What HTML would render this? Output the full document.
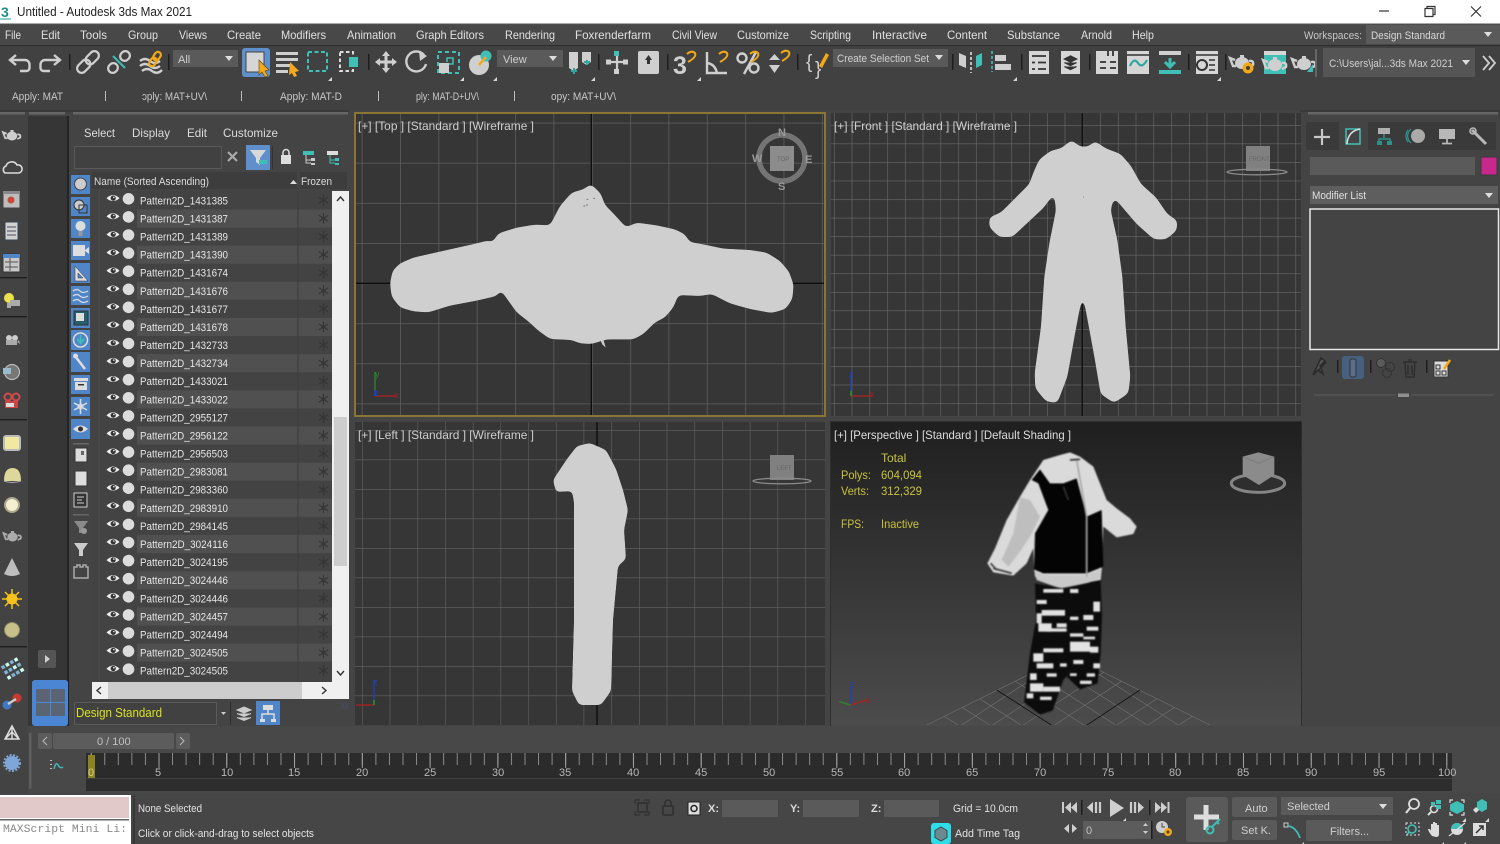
<!DOCTYPE html>
<html lang="en"><head><meta charset="utf-8"><title>Untitled - Autodesk 3ds Max 2021</title>
<style>
html,body{margin:0;padding:0;width:1500px;height:844px;overflow:hidden;background:#444}
svg{display:block;position:absolute;left:0;top:0}
text{font-family:"Liberation Sans",sans-serif;font-size:12px;fill:#dcdcdc}
.s{font-size:11px}
.m text,.m{font-size:12px;fill:#e0e0e0}
.v{font-size:12px;fill:#cfcfcf}
.y{font-size:12px;fill:#c9c23e}
.n{font-size:11px;fill:#e6e6e6}
.t{font-size:11px;fill:#b8b8b8}
.i{fill:none;stroke:#cfcfcf;stroke-width:2.4}
.k{fill:#cfcfcf}
</style></head><body>
<svg width="1500" height="844" viewBox="0 0 1500 844" xmlns="http://www.w3.org/2000/svg">
<defs>
<pattern id="gt" x="361.7" y="122.7" width="38.35" height="40.1" patternUnits="userSpaceOnUse"><path d="M0 0H38.35M0 0V40.1" stroke="#5e5e5e" stroke-width="1.6" fill="none"/></pattern>
<pattern id="gf" x="851.7" y="125" width="17.75" height="18.55" patternUnits="userSpaceOnUse"><path d="M0 0H17.75M0 0V18.55" stroke="#6a6a6a" stroke-width="1.2" fill="none"/></pattern>
<pattern id="gl" x="362" y="430" width="27.7" height="29.5" patternUnits="userSpaceOnUse"><path d="M0 0H27.7M0 0V29.5" stroke="#626262" stroke-width="1.2" fill="none"/></pattern>
<pattern id="tk" x="90.7" y="753" width="13.556" height="12" patternUnits="userSpaceOnUse"><path d="M.5 0V12" stroke="#8a8a8a" stroke-width="1"/></pattern>
<pattern id="tk5" x="90.7" y="753" width="67.78" height="15" patternUnits="userSpaceOnUse"><path d="M.5 0V15" stroke="#a0a0a0" stroke-width="1"/></pattern>
<linearGradient id="pb" x1="0" y1="0" x2="0" y2="1"><stop offset="0" stop-color="#1f1f1f"/><stop offset="1" stop-color="#4c4c4c"/></linearGradient>
<clipPath id="pc"><rect x="0" y="0" width="1410" height="915"/></clipPath>
<filter id="b1" color-interpolation-filters="sRGB"><feGaussianBlur stdDeviation="2.6"/></filter>
<filter id="b2" color-interpolation-filters="sRGB"><feGaussianBlur stdDeviation="14"/></filter>
<filter id="rd" color-interpolation-filters="sRGB"><feGaussianBlur stdDeviation="8"/><feColorMatrix values="1 0 0 0 0 0 1 0 0 0 0 0 1 0 0 0 0 0 16 -7.500"/></filter>
<filter id="rd2" color-interpolation-filters="sRGB" x="-20%" y="-10%" width="140%" height="120%"><feGaussianBlur stdDeviation="2.500"/><feColorMatrix values="1 0 0 0 0 0 1 0 0 0 0 0 1 0 0 0 0 0 16 -7.500"/></filter>
<g id="r">
<path d="M106.500 7 Q113 .5 119.500 7 Q113 12.500 106.500 7Z" fill="#eee"/><circle cx="113.200" cy="6.800" r="2.600" fill="#333"/><circle cx="113.800" cy="6" r=".8" fill="#eee"/>
<circle cx="128.500" cy="7.500" r="5.800" fill="#dcdcdc"/>
<path d="M323.500 3.500V14.500M318.800 6L328.200 12M328.200 6L318.800 12" stroke="#363636" stroke-width="1.200"/><circle cx="323.500" cy="9" r="1.800" fill="#363636"/>
</g>
<path id="fm" d="M0 0L-4 4H0Z" fill="#d8d8d8"/>
<g id="tpot"><ellipse cx="0" cy="0" rx="7" ry="6" fill="#cfcfcf"/><path d="M-7-3L-12-5-9 3-6 3M7-2Q12-3 11 2L7 4" class="i" stroke-width="2"/><rect x="-2" y="-8" width="4" height="3" fill="#cfcfcf"/></g>
</defs>

<rect width="1500" height="844" fill="#444"/>
<!-- title bar -->
<rect width="1500" height="23.500" fill="#fff"/>
<rect y="23" width="1500" height="1.200" fill="#a8a8a8"/>
<text x="1" y="17" style="font-size:14px;font-weight:bold;fill:#1d8f8c">3</text>
<rect x="0" y="18" width="11" height="2" fill="#8fd0cf"/>
<text x="17" y="16" textLength="175" lengthAdjust="spacingAndGlyphs" style="fill:#222;font-size:12.500px">Untitled - Autodesk 3ds Max 2021</text>
<path d="M1379 11H1389" stroke="#333" stroke-width="1.200"/>
<path d="M1425 8.500h8v8h-8zM1427 8.500v-2h8v8h-2" fill="none" stroke="#333" stroke-width="1.200"/>
<path d="M1471 6.500L1481 16.500M1481 6.500L1471 16.500" stroke="#333" stroke-width="1.200"/>

<!-- menu bar -->
<rect y="24.200" width="1500" height="21" fill="#484848"/>
<rect y="45" width="1500" height="1.200" fill="#2e2e2e"/>
<g class="m">
<text x="5" y="39" textLength="16" lengthAdjust="spacingAndGlyphs">File</text>
<text x="41" y="39" textLength="19" lengthAdjust="spacingAndGlyphs">Edit</text>
<text x="80" y="39" textLength="27" lengthAdjust="spacingAndGlyphs">Tools</text>
<text x="128" y="39" textLength="30" lengthAdjust="spacingAndGlyphs">Group</text>
<text x="179" y="39" textLength="28" lengthAdjust="spacingAndGlyphs">Views</text>
<text x="227" y="39" textLength="34" lengthAdjust="spacingAndGlyphs">Create</text>
<text x="281" y="39" textLength="45" lengthAdjust="spacingAndGlyphs">Modifiers</text>
<text x="347" y="39" textLength="49" lengthAdjust="spacingAndGlyphs">Animation</text>
<text x="416" y="39" textLength="68" lengthAdjust="spacingAndGlyphs">Graph Editors</text>
<text x="505" y="39" textLength="50" lengthAdjust="spacingAndGlyphs">Rendering</text>
<text x="575" y="39" textLength="76" lengthAdjust="spacingAndGlyphs">Foxrenderfarm</text>
<text x="672" y="39" textLength="45" lengthAdjust="spacingAndGlyphs">Civil View</text>
<text x="737" y="39" textLength="52" lengthAdjust="spacingAndGlyphs">Customize</text>
<text x="810" y="39" textLength="41" lengthAdjust="spacingAndGlyphs">Scripting</text>
<text x="872" y="39" textLength="55" lengthAdjust="spacingAndGlyphs">Interactive</text>
<text x="947" y="39" textLength="40" lengthAdjust="spacingAndGlyphs">Content</text>
<text x="1007" y="39" textLength="53" lengthAdjust="spacingAndGlyphs">Substance</text>
<text x="1081" y="39" textLength="31" lengthAdjust="spacingAndGlyphs">Arnold</text>
<text x="1132" y="39" textLength="22" lengthAdjust="spacingAndGlyphs">Help</text>
</g>
<text x="1304" y="39" class="s" textLength="58" lengthAdjust="spacingAndGlyphs" style="fill:#c8c8c8">Workspaces:</text>
<rect x="1366" y="25" width="134" height="19" fill="#5a5a5a"/>
<text x="1371" y="39" class="s" textLength="74" lengthAdjust="spacingAndGlyphs" style="fill:#d8d8d8">Design Standard</text>
<path d="M1484 32h8l-4 5z" fill="#ddd"/>

<!-- main toolbar -->
<rect y="46.200" width="1500" height="38" fill="#414141"/>
<path d="M16 55l-6 5 6 5" class="i" stroke-width="3"/><path d="M11 60H25a4.500 4.500 0 0 1 4.500 4.500V68a3 3 0 0 1-3 3H20" class="i" stroke-width="3"/>
<g transform="translate(70,0) scale(-1,1)"><path d="M16 55l-6 5 6 5" class="i" stroke-width="3"/><path d="M11 60H25a4.500 4.500 0 0 1 4.500 4.500V68a3 3 0 0 1-3 3H20" class="i" stroke-width="3"/></g>
<rect x="69" y="54" width="1.500" height="16" fill="#1e1e1e"/>
<g transform="translate(88,62) rotate(-45)" fill="none" stroke="#cfcfcf" stroke-width="2.200"><rect x="-13.500" y="-4.500" width="15" height="9" rx="4.500"/><rect x="-1.500" y="-4.500" width="15" height="9" rx="4.500"/></g>
<g transform="translate(119,62) rotate(-45)" fill="none" stroke="#cfcfcf" stroke-width="2.200"><rect x="-13.500" y="-4.500" width="10" height="9" rx="4.500"/><rect x="3.500" y="-4.500" width="10" height="9" rx="4.500"/></g>
<path d="M113 56L125 68" stroke="#3cb8b0" stroke-width="2.200"/>
<path d="M140 61q5-4 10 0t10 0M140 66q5-4 10 0t10 0M142 71q5-4 10 0t10-1" class="i" stroke-width="1.800"/>
<g transform="translate(155,59) rotate(-55)" fill="none" stroke="#f2a818" stroke-width="2.200"><rect x="-8" y="-3" width="9" height="6" rx="3"/><rect x="-1" y="-3" width="9" height="6" rx="3"/></g>
<rect x="168" y="54" width="1.500" height="16" fill="#1e1e1e"/>
<rect x="173" y="50" width="65" height="17" fill="#5a5a5a"/>
<text x="178" y="63" class="s" style="fill:#cfcfcf">All</text>
<path d="M225 56h8l-4 5z" fill="#ddd"/>
<rect x="242" y="48" width="28" height="29" rx="3" fill="#5f90cc"/>
<rect x="246" y="52" width="18" height="20" fill="#d6d6d6" stroke="#444"/>
<path d="M259 60l10 10-4 1 3 5-3 1-3-5-3 3z" fill="#f4a91c" stroke="#5a4210" stroke-width=".6"/>
<path d="M276 52h22v3h-22zM276 58h22v3h-22zM276 64h14v3h-14zM276 70h12v3h-12z" fill="#cfcfcf"/>
<path d="M290 62l9 9-4 1 2 4-3 1-2-4-3 2z" fill="#f4a91c"/>
<rect x="308" y="52" width="19" height="19" fill="none" stroke="#3fbfb6" stroke-width="2" stroke-dasharray="4 2.500"/>
<use href="#fm" x="332" y="77"/>
<rect x="340" y="52" width="13" height="19" fill="none" stroke="#ddd" stroke-width="2" stroke-dasharray="3.500 2.500"/>
<rect x="349" y="57" width="9" height="10" fill="#3fbfb6"/>
<rect x="368" y="54" width="1.500" height="16" fill="#1e1e1e"/>
<path d="M386 51l4 5h-2.500v4.500H392V58l5 4-5 4v-2.500h-4.500V68h2.500l-4 5-4-5h2.500v-4.500H380V66l-5-4 5-4v2.500h4.500V56H382z" class="k"/>
<path d="M424 55a10 10 0 1 0 2 9" class="i" stroke-width="3.200"/><path d="M419 51l8 5-7 5z" class="k"/>
<rect x="438" y="52" width="21" height="21" fill="none" stroke="#3fbfb6" stroke-width="2" stroke-dasharray="4 3"/>
<rect x="439" y="63" width="10" height="10" fill="#cfcfcf"/><path d="M447 62v-4h6v6h-4" fill="none" stroke="#3fbfb6" stroke-width="1.500"/>
<use href="#fm" x="464" y="77"/>
<circle cx="479" cy="65" r="10" fill="#cfcfcf"/><circle cx="486" cy="56" r="5.500" fill="#3fbfb6"/><path d="M479 65l7-8" stroke="#f4a91c" stroke-width="2.500"/><use href="#fm" x="497" y="77"/>
<rect x="497" y="50" width="66" height="17" fill="#5a5a5a"/>
<text x="503" y="63" class="s" style="fill:#cfcfcf">View</text>
<path d="M549 56h8l-4 5z" fill="#ddd"/>
<path d="M569 52h9v16l-4.500 3-4.500-3zM582 52h9v10l-4.500 3-4.500-3z" fill="#cfcfcf"/>
<path d="M574 68v6M571 71h6M587 60v5M584 62h6" stroke="#2fa8a2" stroke-width="2"/>
<use href="#fm" x="595" y="77"/><rect x="598" y="54" width="1.500" height="16" fill="#1e1e1e"/>
<path d="M617 56v18M606 62h22" stroke="#cfcfcf" stroke-width="2.200"/>
<rect x="614" y="51" width="5" height="5" fill="#3fbfb6"/><rect x="606" y="59.500" width="5" height="5" fill="#cfcfcf"/><rect x="623" y="59.500" width="5" height="5" fill="#cfcfcf"/><rect x="614" y="69" width="5" height="5" fill="#cfcfcf"/>
<rect x="638" y="51" width="21" height="23" rx="2" fill="#cfcfcf"/><path d="M645 60l3.500-5 3.500 5h-2v4h-3v-4z" fill="#333"/>
<rect x="667" y="54" width="1.500" height="16" fill="#1e1e1e"/>
<text x="673" y="74" style="font-size:25px;font-weight:bold;fill:#cfcfcf">3</text>
<path d="M688 62q9-5 7-9-3-3-8 1" fill="none" stroke="#f2a818" stroke-width="2"/><use href="#fm" x="701" y="77"/>
<path d="M707 52v21h20M707 63q8 1 10 10" class="i" stroke-width="2.400"/><path d="M720 62q9-5 7-9-3-3-8 1" fill="none" stroke="#f2a818" stroke-width="2"/>
<circle cx="742" cy="58" r="4.500" class="i"/><circle cx="754" cy="68" r="4.500" class="i"/><path d="M756 52l-12 22" class="i"/>
<path d="M745 62q9-5 7-9-3-3-8 1" fill="none" stroke="#f2a818" stroke-width="2" transform="translate(6,0)"/>
<path d="M769 60l5.500-6 5.500 6zM769 65h11l-5.500 8z" class="k"/>
<path d="M782 61q9-5 7-9-3-3-8 1" fill="none" stroke="#f2a818" stroke-width="2"/>
<rect x="797" y="54" width="1.500" height="16" fill="#1e1e1e"/>
<text x="806" y="68" style="font-size:19px;fill:#cfcfcf">{</text><text x="815" y="75" style="font-size:19px;fill:#cfcfcf">}</text>
<path d="M819 66l7-13 3 2-7 13z" fill="#f2a818"/>
<rect x="833" y="49" width="115" height="18" fill="#5a5a5a"/>
<text x="837" y="62" class="s" textLength="92" lengthAdjust="spacingAndGlyphs" style="fill:#cfcfcf">Create Selection Set</text>
<path d="M935 55h8l-4 5z" fill="#ddd"/>
<rect x="952" y="54" width="1.500" height="16" fill="#1e1e1e"/>
<path d="M959 53l7 3v12l-7-3z" class="k"/><path d="M971 52v21" stroke="#ddd" stroke-width="1.600" stroke-dasharray="3 2"/><path d="M982 53l-6 3v12l6-3z" fill="#3fbfb6"/>
<path d="M992 51v21" stroke="#3fbfb6" stroke-width="1.600" stroke-dasharray="3 2"/><rect x="995" y="55" width="11" height="6" class="k"/><rect x="995" y="64" width="16" height="6" class="k"/><use href="#fm" x="1017" y="77"/>
<rect x="1021" y="54" width="1.500" height="16" fill="#1e1e1e"/>
<rect x="1029" y="51" width="20" height="23" fill="#d6d6d6"/><path d="M1032 56h14M1032 62.500h3M1038 62.500h8M1032 69h3M1038 69h8" stroke="#333" stroke-width="1.800"/>
<rect x="1061" y="51" width="19" height="23" fill="#d6d6d6"/><path d="M1070.500 56l6 3-6 3-6-3zM1064.500 62.500l6 3 6-3M1064.500 66.500l6 3 6-3" fill="#333" stroke="#333" stroke-width="1.400"/>
<rect x="1089" y="54" width="1.500" height="16" fill="#1e1e1e"/>
<rect x="1096" y="51" width="22" height="23" fill="#d6d6d6"/><path d="M1108 51v5M1113 51v5M1100 62h6M1110 62h6M1100 68h6M1110 68h6" stroke="#333" stroke-width="1.800"/>
<rect x="1127" y="51" width="22" height="23" fill="#d6d6d6"/><path d="M1127 55h22" stroke="#333" stroke-width="1.500"/><path d="M1130 66q4-9 8-3t9-3" fill="none" stroke="#2fa8a2" stroke-width="2.200"/>
<rect x="1159" y="51" width="22" height="4" fill="#cfcfcf"/><path d="M1170 58v7M1165 62l5 5 5-5" stroke="#3fbfb6" stroke-width="3" fill="none"/><rect x="1159" y="70" width="22" height="4" fill="#3fbfb6"/>
<rect x="1188" y="54" width="1.500" height="16" fill="#1e1e1e"/>
<rect x="1196" y="51" width="22" height="23" fill="#d6d6d6"/><path d="M1196 55h22" stroke="#333" stroke-width="1.500"/><circle cx="1202" cy="65" r="5" fill="none" stroke="#333" stroke-width="2"/><path d="M1209 60h6M1209 65h6M1209 70h6" stroke="#333" stroke-width="1.500"/><use href="#fm" x="1221" y="77"/>
<rect x="1225" y="54" width="1.500" height="16" fill="#1e1e1e"/>
<use href="#tpot" x="1242" y="63"/>
<circle cx="1248" cy="68" r="5.500" fill="#f2a818"/><circle cx="1248" cy="68" r="2" fill="#414141"/>
<rect x="1264" y="51" width="22" height="23" fill="#3fbfb6"/><rect x="1264" y="51" width="22" height="4" fill="#d6d6d6"/><use href="#tpot" x="1275" y="65"/>
<use href="#tpot" x="1304" y="64"/><path d="M1307 72l6-8v8z" fill="#3fbfb6"/>
<rect x="1315" y="49" width="2" height="28" fill="#666"/>
<rect x="1323" y="48" width="152" height="29" fill="#555"/>
<text x="1329" y="67" class="s" textLength="124" lengthAdjust="spacingAndGlyphs" style="fill:#d0d0d0">C:\Users\jal...3ds Max 2021</text>
<path d="M1462 60h8l-4 5z" fill="#ddd"/>
<path d="M1483 56l6 7-6 7M1489 56l6 7-6 7" fill="none" stroke="#cfcfcf" stroke-width="1.800"/>

<!-- ribbon row -->
<rect y="84" width="1500" height="26" fill="#414141"/>
<text x="12" y="100" class="s" textLength="51" lengthAdjust="spacingAndGlyphs" style="fill:#c8c8c8">Apply: MAT</text>
<text x="142" y="100" class="s" textLength="65" lengthAdjust="spacingAndGlyphs" style="fill:#c8c8c8">ɔply: MAT+UV\</text>
<text x="280" y="100" class="s" textLength="62" lengthAdjust="spacingAndGlyphs" style="fill:#c8c8c8">Apply: MAT-D</text>
<text x="416" y="100" class="s" textLength="63" lengthAdjust="spacingAndGlyphs" style="fill:#c8c8c8">ply: MAT-D+UV\</text>
<text x="551" y="100" class="s" textLength="65" lengthAdjust="spacingAndGlyphs" style="fill:#c8c8c8">opy: MAT+UV\</text>
<path d="M105.500 91v10M241.500 91v10M378.500 91v10M514.500 91v10" stroke="#bbb" stroke-width="1"/>

<!-- dock strip -->
<rect y="110" width="1500" height="2" fill="#3a3a3a"/>
<rect x="0" y="112" width="25" height="2.500" fill="#666"/><rect x="29" y="112" width="36" height="2.500" fill="#666"/><rect x="73" y="112" width="275" height="2.500" fill="#666"/><rect x="1308" y="112" width="190" height="2.500" fill="#666"/>

<!-- left strip -->
<rect x="0" y="116" width="28" height="610" fill="#434343"/>
<rect x="28" y="116" width="39" height="610" fill="#363636"/>
<rect x="67" y="116" width="2" height="610" fill="#242424"/>
<g transform="translate(12,136) scale(.75)"><use href="#tpot"/></g>
<path d="M5 173a4 4 0 0 1 1-7 6 6 0 0 1 11-1 4 4 0 0 1 2 8z" fill="none" stroke="#ddd" stroke-width="1.600"/>
<rect x="3" y="191" width="17" height="17" fill="#bdbdbd" stroke="#444"/><rect x="3" y="191" width="17" height="3" fill="#888"/><circle cx="11" cy="200" r="3.500" fill="#c8483a"/>
<rect x="5" y="222" width="13" height="18" fill="#d0d0d0" stroke="#345"/><path d="M7 227h9M7 231h9M7 235h9" stroke="#667" stroke-width="1.200"/>
<rect x="3" y="254" width="17" height="18" fill="#c8c8c8" stroke="#333"/><rect x="3" y="254" width="17" height="4" fill="#4f86c6"/><path d="M5 262h13M5 267h13M10 258v13" stroke="#555"/>
<rect x="0" y="277" width="27" height="1.400" fill="#1e1e1e"/>
<circle cx="9" cy="298" r="5" fill="#ede04e"/><rect x="7" y="303" width="4" height="5" fill="#aaa"/><rect x="10" y="300" width="10" height="6" fill="#aaa"/>
<rect x="0" y="316" width="27" height="1.400" fill="#1e1e1e"/>
<circle cx="9" cy="338" r="3" fill="#ccc"/><circle cx="15" cy="338" r="3" fill="#ccc"/><rect x="6" y="340" width="11" height="5" fill="#aaa"/><path d="M19 340l-2 2 3 2z" fill="#aaa"/>
<circle cx="12" cy="372" r="7.500" fill="#777" stroke="#ccc"/><rect x="3" y="368" width="8" height="6" fill="#9bc"/>
<circle cx="8" cy="397" r="3.500" fill="none" stroke="#d04a4a" stroke-width="2"/><circle cx="16" cy="397" r="3.500" fill="none" stroke="#d04a4a" stroke-width="2"/><rect x="5" y="401" width="13" height="7" fill="#c94545"/><rect x="6" y="403" width="8" height="4" fill="#ddd"/>
<rect x="0" y="419" width="27" height="1.400" fill="#1e1e1e"/>
<rect x="4" y="436" width="16" height="14" rx="2" fill="#f1e9a0" stroke="#bbb" stroke-width="2"/>
<path d="M4 481q0-13 8.500-13t8.500 13z" fill="#ddd79c"/><path d="M4 481q8 3 17 0" stroke="#aaa" fill="none"/>
<circle cx="12" cy="505" r="7" fill="#f3efcf" stroke="#a9a78c" stroke-width="2"/>
<g transform="translate(12.500,537) scale(.75)" style="opacity:.75"><use href="#tpot"/></g>
<path d="M12 558L20 574Q12 578 4 574z" fill="#bdbdbd"/>
<circle cx="12" cy="599" r="5.500" fill="#f6c21b"/><path d="M12 589v20M2 599h20M5 592l14 14M19 592L5 606" stroke="#f6c21b" stroke-width="1.500"/>
<circle cx="12" cy="630" r="7.500" fill="#c7c08a" stroke="#8d8a63"/>
<rect x="0" y="646" width="27" height="1.400" fill="#1e1e1e"/>
<g transform="rotate(-30 12 668)"><rect x="3" y="661" width="3.500" height="3.500" fill="#7fb2d6"/><rect x="8" y="661" width="3.500" height="3.500" fill="#cfe"/><rect x="13" y="661" width="3.500" height="3.500" fill="#7fb2d6"/><rect x="18" y="661" width="3.500" height="3.500" fill="#cfe"/><rect x="3" y="667" width="3.500" height="3.500" fill="#7fb2d6"/><rect x="8" y="667" width="3.500" height="3.500" fill="#7fb2d6"/><rect x="13" y="667" width="3.500" height="3.500" fill="#cfe"/><rect x="18" y="667" width="3.500" height="3.500" fill="#7fb2d6"/><rect x="3" y="673" width="3.500" height="3.500" fill="#cfe"/><rect x="8" y="673" width="3.500" height="3.500" fill="#7fb2d6"/><rect x="13" y="673" width="3.500" height="3.500" fill="#7fb2d6"/><rect x="18" y="673" width="3.500" height="3.500" fill="#cfe"/></g>
<circle cx="7" cy="705" r="4.500" fill="#3f78c0"/><circle cx="17" cy="698" r="4.500" fill="#c83a30"/><path d="M8 704L16 699" stroke="#ccc" stroke-width="2.500"/>
<rect x="38" y="650" width="18" height="18" rx="2" fill="#555"/><path d="M45 655l5 4-5 4z" fill="#cfcfcf"/>
<rect x="32" y="680" width="36" height="46" rx="3" fill="#4a86d4"/>
<rect x="36" y="689" width="14" height="13" rx="1" fill="#5a6472"/><rect x="51" y="689" width="14" height="13" rx="1" fill="#5a6472"/><rect x="36" y="703" width="14" height="13" rx="1" fill="#5a6472"/><rect x="51" y="703" width="14" height="13" rx="1" fill="#5a6472"/>

<!-- explorer -->
<rect x="69" y="116" width="280" height="610" fill="#444"/>
<text x="84" y="137" textLength="31" lengthAdjust="spacingAndGlyphs">Select</text>
<text x="132" y="137" textLength="38" lengthAdjust="spacingAndGlyphs">Display</text>
<text x="187" y="137" textLength="20" lengthAdjust="spacingAndGlyphs">Edit</text>
<text x="223" y="137" textLength="55" lengthAdjust="spacingAndGlyphs">Customize</text>
<rect x="74.500" y="146.500" width="147" height="22" fill="#414141" stroke="#595959"/>
<path d="M228 152l9 9M237 152l-9 9" stroke="#aaa" stroke-width="2.200"/>
<rect x="246" y="145" width="24" height="25" fill="#5f90cc"/>
<path d="M250 150h16l-6 8v7l-4-3v-4z" fill="#d8d8d8"/><path d="M259 160h8v4h-8z" fill="#3fbfb6"/>
<rect x="272" y="146" width="1" height="23" fill="#333"/>
<rect x="281" y="155" width="10" height="9" fill="#ddd"/><path d="M283 155v-2.500a3 3 0 0 1 6 0V155" fill="none" stroke="#ddd" stroke-width="1.500"/>
<rect x="303" y="151" width="11" height="4" fill="#3fbfb6"/><path d="M306 155v8h5M306 160h5" stroke="#ccc" fill="none"/><rect x="311" y="158" width="4" height="3" fill="#ccc"/><rect x="311" y="163" width="4" height="2" fill="#ccc"/>
<rect x="327" y="151" width="11" height="4" fill="#ddd"/><path d="M330 155v8h5M330 160h5" stroke="#3fbfb6" fill="none"/><rect x="335" y="158" width="4" height="3" fill="#3fbfb6"/><rect x="335" y="163" width="4" height="2" fill="#3fbfb6"/>
<rect x="92" y="172" width="205" height="17" fill="#3d3d3d"/><rect x="300" y="172" width="47" height="17" fill="#3d3d3d"/>
<text x="94" y="185" class="s" textLength="115" lengthAdjust="spacingAndGlyphs" style="fill:#dcdcdc">Name (Sorted Ascending)</text>
<path d="M290 184h7l-3.500-4z" fill="#ddd"/>
<text x="301" y="185" class="s" textLength="31" lengthAdjust="spacingAndGlyphs" style="fill:#dcdcdc">Frozen</text>
<g fill="#5086c8"><rect x="71" y="175" width="19" height="19"/><rect x="71" y="197" width="19" height="19"/><rect x="71" y="219" width="19" height="19"/><rect x="71" y="241" width="19" height="19"/><rect x="71" y="263" width="19" height="20"/><rect x="71" y="286" width="19" height="19"/><rect x="71" y="308" width="19" height="20"/><rect x="71" y="330" width="19" height="20"/><rect x="71" y="352" width="19" height="20"/><rect x="71" y="375" width="19" height="19"/><rect x="71" y="397" width="19" height="19"/><rect x="71" y="419" width="19" height="20"/></g>
<circle cx="80.500" cy="184" r="6" fill="#ccc" stroke="#444"/>
<circle cx="79" cy="205" r="5" fill="#ccc" stroke="#333"/><rect x="79" y="205" width="8" height="8" fill="none" stroke="#333"/>
<circle cx="80.500" cy="226" r="5" fill="#ddd"/><rect x="78.500" y="231" width="4" height="5" fill="#999"/>
<rect x="73" y="245" width="12" height="11" fill="#ddd"/><path d="M85 250l4-3v7l-4-3z" fill="#ddd"/>
<path d="M75 266v15h13zM78 273v5h5z" fill="#ddd" fill-rule="evenodd" stroke="#333" stroke-width=".5"/>
<path d="M73 291q4-3 7 0t8 0M73 296q4-3 7 0t8 0M73 301q4-3 7 0t8 0" fill="none" stroke="#ddd" stroke-width="1.200"/>
<rect x="74" y="311" width="14" height="14" fill="#26606a" stroke="#333"/><rect x="76" y="313" width="8" height="8" fill="#ddd"/>
<circle cx="80.500" cy="340" r="7" fill="none" stroke="#ddd" stroke-width="1.500"/><path d="M80.500 335v7M77 339l3.500 4 3.500-4" fill="none" stroke="#3fbfb6" stroke-width="1.800"/>
<path d="M75 356l10 13" stroke="#ddd" stroke-width="2.500"/><circle cx="75.500" cy="356" r="2.500" fill="#ddd"/>
<path d="M74 378h14v3H74zM75 382h12v8H75z" fill="#ddd"/><rect x="78" y="384" width="6" height="1.500" fill="#333"/>
<path d="M80.500 399v15M74 403l13 7M87 403l-13 7" stroke="#ddd" stroke-width="1.500"/><circle cx="80.500" cy="406.500" r="2.500" fill="none" stroke="#ddd"/>
<path d="M73 429Q80.500 422 88 429 80.500 436 73 429z" fill="#ddd"/><circle cx="80.500" cy="429" r="2.500" fill="#333"/>
<rect x="73" y="443" width="16" height="1.500" fill="#666"/>
<rect x="75" y="448" width="12" height="14" fill="#ddd" stroke="#333"/><path d="M81 451h3v4h-3z" fill="#666"/>
<rect x="75" y="471" width="12" height="15" fill="#ddd" stroke="#333"/>
<rect x="74" y="493" width="13" height="14" fill="#333" stroke="#ccc"/><path d="M77 497h7M77 500h5M77 503h7" stroke="#ccc"/>
<rect x="73" y="514" width="16" height="1.500" fill="#666"/>
<path d="M74 521h14l-5 7v5h-4v-5z" fill="#8a8a8a"/><circle cx="84" cy="531" r="3" fill="#999"/>
<path d="M74 543h14l-5 7v6h-4v-6z" fill="#ccc"/>
<path d="M74 578v-11h3v-2h3v2h3v-2h3v2h2v11z" fill="none" stroke="#aaa" stroke-width="1.500"/>
<rect x="92" y="191" width="240" height="491" fill="#434343"/>
<path d="M99 191V680" stroke="#4c4c4c"/>
<g fill="#505050"><rect x="137" y="209.400" width="195" height="18.100"/><rect x="137" y="245.600" width="195" height="18.100"/><rect x="137" y="281.800" width="195" height="18"/><rect x="137" y="317.900" width="195" height="18.100"/><rect x="137" y="354.100" width="195" height="18.100"/><rect x="137" y="390.300" width="195" height="18.100"/><rect x="137" y="426.500" width="195" height="18.100"/><rect x="137" y="462.700" width="195" height="18"/><rect x="137" y="498.800" width="195" height="18.100"/><rect x="137" y="535" width="195" height="18.100"/><rect x="137" y="571.200" width="195" height="18.100"/><rect x="137" y="607.400" width="195" height="18.100"/><rect x="137" y="643.600" width="195" height="18"/></g>
<rect x="297.500" y="191" width="1" height="491" fill="#3b3b3b"/>
<g>
<g transform="translate(0,191.300)"><use href="#r"/><text x="140" y="13" class="n" textLength="88" lengthAdjust="spacingAndGlyphs">Pattern2D_1431385</text></g>
<g transform="translate(0,209.400)"><use href="#r"/><text x="140" y="13" class="n" textLength="88" lengthAdjust="spacingAndGlyphs">Pattern2D_1431387</text></g>
<g transform="translate(0,227.500)"><use href="#r"/><text x="140" y="13" class="n" textLength="88" lengthAdjust="spacingAndGlyphs">Pattern2D_1431389</text></g>
<g transform="translate(0,245.600)"><use href="#r"/><text x="140" y="13" class="n" textLength="88" lengthAdjust="spacingAndGlyphs">Pattern2D_1431390</text></g>
<g transform="translate(0,263.700)"><use href="#r"/><text x="140" y="13" class="n" textLength="88" lengthAdjust="spacingAndGlyphs">Pattern2D_1431674</text></g>
<g transform="translate(0,281.800)"><use href="#r"/><text x="140" y="13" class="n" textLength="88" lengthAdjust="spacingAndGlyphs">Pattern2D_1431676</text></g>
<g transform="translate(0,299.800)"><use href="#r"/><text x="140" y="13" class="n" textLength="88" lengthAdjust="spacingAndGlyphs">Pattern2D_1431677</text></g>
<g transform="translate(0,317.900)"><use href="#r"/><text x="140" y="13" class="n" textLength="88" lengthAdjust="spacingAndGlyphs">Pattern2D_1431678</text></g>
<g transform="translate(0,336)"><use href="#r"/><text x="140" y="13" class="n" textLength="88" lengthAdjust="spacingAndGlyphs">Pattern2D_1432733</text></g>
<g transform="translate(0,354.100)"><use href="#r"/><text x="140" y="13" class="n" textLength="88" lengthAdjust="spacingAndGlyphs">Pattern2D_1432734</text></g>
<g transform="translate(0,372.200)"><use href="#r"/><text x="140" y="13" class="n" textLength="88" lengthAdjust="spacingAndGlyphs">Pattern2D_1433021</text></g>
<g transform="translate(0,390.300)"><use href="#r"/><text x="140" y="13" class="n" textLength="88" lengthAdjust="spacingAndGlyphs">Pattern2D_1433022</text></g>
<g transform="translate(0,408.400)"><use href="#r"/><text x="140" y="13" class="n" textLength="88" lengthAdjust="spacingAndGlyphs">Pattern2D_2955127</text></g>
<g transform="translate(0,426.500)"><use href="#r"/><text x="140" y="13" class="n" textLength="88" lengthAdjust="spacingAndGlyphs">Pattern2D_2956122</text></g>
<g transform="translate(0,444.600)"><use href="#r"/><text x="140" y="13" class="n" textLength="88" lengthAdjust="spacingAndGlyphs">Pattern2D_2956503</text></g>
<g transform="translate(0,462.700)"><use href="#r"/><text x="140" y="13" class="n" textLength="88" lengthAdjust="spacingAndGlyphs">Pattern2D_2983081</text></g>
<g transform="translate(0,480.700)"><use href="#r"/><text x="140" y="13" class="n" textLength="88" lengthAdjust="spacingAndGlyphs">Pattern2D_2983360</text></g>
<g transform="translate(0,498.800)"><use href="#r"/><text x="140" y="13" class="n" textLength="88" lengthAdjust="spacingAndGlyphs">Pattern2D_2983910</text></g>
<g transform="translate(0,516.900)"><use href="#r"/><text x="140" y="13" class="n" textLength="88" lengthAdjust="spacingAndGlyphs">Pattern2D_2984145</text></g>
<g transform="translate(0,535)"><use href="#r"/><text x="140" y="13" class="n" textLength="88" lengthAdjust="spacingAndGlyphs">Pattern2D_3024116</text></g>
<g transform="translate(0,553.100)"><use href="#r"/><text x="140" y="13" class="n" textLength="88" lengthAdjust="spacingAndGlyphs">Pattern2D_3024195</text></g>
<g transform="translate(0,571.200)"><use href="#r"/><text x="140" y="13" class="n" textLength="88" lengthAdjust="spacingAndGlyphs">Pattern2D_3024446</text></g>
<g transform="translate(0,589.300)"><use href="#r"/><text x="140" y="13" class="n" textLength="88" lengthAdjust="spacingAndGlyphs">Pattern2D_3024446</text></g>
<g transform="translate(0,607.400)"><use href="#r"/><text x="140" y="13" class="n" textLength="88" lengthAdjust="spacingAndGlyphs">Pattern2D_3024457</text></g>
<g transform="translate(0,625.500)"><use href="#r"/><text x="140" y="13" class="n" textLength="88" lengthAdjust="spacingAndGlyphs">Pattern2D_3024494</text></g>
<g transform="translate(0,643.600)"><use href="#r"/><text x="140" y="13" class="n" textLength="88" lengthAdjust="spacingAndGlyphs">Pattern2D_3024505</text></g>
<g transform="translate(0,661.700)"><use href="#r"/><text x="140" y="13" class="n" textLength="88" lengthAdjust="spacingAndGlyphs">Pattern2D_3024505</text></g>
</g>
<rect x="332" y="191" width="17" height="491" fill="#f0f0f0"/>
<rect x="334" y="417" width="13" height="149" fill="#cdcdcd"/>
<path d="M337 201l3.500-4 3.500 4M337 671l3.500 4 3.500-4" fill="none" stroke="#333" stroke-width="1.400"/>
<rect x="92" y="682" width="257" height="17" fill="#f0f0f0"/>
<rect x="108" y="682" width="194" height="17" fill="#cdcdcd"/>
<path d="M101 687l-4 3.500 4 3.500M322 687l4 3.500-4 3.500" fill="none" stroke="#333" stroke-width="1.400"/>
<rect x="74.500" y="702.500" width="142" height="22" fill="#414141" stroke="#5a5a5a"/>
<text x="76" y="717" style="font-size:12.500px;fill:#d9e21f" textLength="86" lengthAdjust="spacingAndGlyphs">Design Standard</text>
<path d="M221 712h5l-2.500 3z" fill="#ccc"/>
<rect x="230" y="702" width="1" height="23" fill="#2e2e2e"/>
<path d="M244 707l7 3-7 3-7-3zM237 713.500l7 3 7-3M237 717.500l7 3 7-3" fill="#ccc" stroke="#ccc"/>
<rect x="256" y="701" width="24" height="24" fill="#5086c8"/>
<rect x="263" y="705" width="10" height="5" fill="#ddd"/><path d="M268 710v4M262 720v-6h12v6" fill="none" stroke="#ddd" stroke-width="1.500"/><rect x="260" y="719" width="5" height="3" fill="#ddd"/><rect x="271" y="719" width="5" height="3" fill="#ddd"/>
<path d="M341 703l3 3-3 3M345 703l3 3-3 3" stroke="#4a4a70" fill="none"/>

<!-- viewports -->
<rect x="349" y="110" width="951" height="620" fill="#444"/>
<!-- Top -->
<rect x="355" y="113" width="470" height="303" fill="#363636"/>
<rect x="355" y="113" width="470" height="303" fill="url(#gt)"/>
<path d="M591.300 113V416M355 283.300H825" stroke="#0c0c0c" stroke-width="1.300"/>
<rect x="355" y="113" width="470" height="303" fill="none" stroke="#8a7632" stroke-width="2"/>
<g transform="translate(350,110) scale(.33333)">
<path filter="url(#rd)" fill="#cfcfcf" d="M723 222L737 236 752 250 765 285 790 310 828 352 860 338 920 346 975 358 1005 373 1019 396 1060 403 1120 416 1200 420 1250 428 1290 453 1317 485 1331 525 1327 567 1307 597 1265 609 1200 597 1140 580 1085 552 1050 558 985 555 970 592 945 622 915 637 880 672 850 688 770 688 725 702 690 700 665 690 600 687 565 662 535 634 500 607 475 572 452 540 440 558 380 572 300 587 235 607 190 604 150 592 125 560 120 520 128 482 150 460 190 443 300 418 380 400 415 391 427 398 445 370 500 353 555 344 600 346 630 288 665 248 700 238Z"/>
<path fill="#cfcfcf" d="M748 682L770 684 761 692 767 713 757 703Z"/>
<path d="M700 288h6M710 268h5M730 265h5M708 285h6" stroke="#777" stroke-width="3"/>
</g>
<text x="358" y="130" class="v" textLength="176" lengthAdjust="spacingAndGlyphs">[+] [Top ] [Standard ] [Wireframe ]</text>
<circle cx="782" cy="158" r="23" fill="none" stroke="#747474" stroke-width="5.500"/>
<rect x="770" y="146" width="24" height="25" fill="#8c8c8c"/>
<text x="777" y="161" style="font-size:6px;fill:#666">TOP</text>
<text x="778" y="136" style="font-size:11px;font-weight:bold;fill:#9a9a9a">N</text><text x="752" y="162" style="font-size:11px;font-weight:bold;fill:#9a9a9a">W</text><text x="805" y="163" style="font-size:11px;font-weight:bold;fill:#9a9a9a">E</text><text x="778" y="190" style="font-size:11px;font-weight:bold;fill:#9a9a9a">S</text>
<path d="M375 396V372" stroke="#2a8a2a" stroke-width="1.300"/><path d="M375 396H396" stroke="#b02020" stroke-width="1.300"/><path d="M375 396v-6" stroke="#2040c0" stroke-width="1.800"/>
<text x="375" y="377" style="font-size:9px;fill:#2a8a2a">y</text><text x="394" y="398" style="font-size:9px;fill:#a02020">x</text><text x="375" y="396" style="font-size:8px;fill:#2040c0">z</text>

<!-- Front -->
<rect x="831" y="113" width="470" height="303" fill="#363636"/>
<rect x="831" y="113" width="470" height="303" fill="url(#gf)"/>
<path d="M1082.300 113V416" stroke="#0c0c0c" stroke-width="1.300"/>
<g transform="translate(830,110) scale(.33333)">
<path filter="url(#rd)" fill="#cfcfcf" d="M725 90L750 110 775 110 795 93 827 115 872 132 903 168 933 222 978 262 1012 312 1042 332 1040 362 1008 388 972 388 920 342 852 262 842 300 862 390 877 500 887 650 901 800 895 850 852 879 812 852 793 740 758 550 737 660 712 800 682 879 648 874 616 835 614 790 633 650 643 500 658 400 678 300 672 250 642 292 547 381 508 381 478 352 478 322 513 307 598 222 610 188 628 148 663 122 693 115Z"/>
<circle cx="761" cy="261" r="1.500" fill="#777"/>
</g>
<text x="834" y="130" class="v" textLength="183" lengthAdjust="spacingAndGlyphs">[+] [Front ] [Standard ] [Wireframe ]</text>
<rect x="1246" y="146" width="24" height="25" fill="#808080"/>
<text x="1249" y="161" style="font-size:6px;fill:#666">FRONT</text>
<ellipse cx="1257" cy="172" rx="30" ry="2.800" fill="none" stroke="#8a8a8a" stroke-width="1.300"/>
<path d="M851 396V372" stroke="#2040c0" stroke-width="1.300"/><path d="M851 396H872" stroke="#b02020" stroke-width="1.300"/><path d="M851 396v-5" stroke="#2a8a2a" stroke-width="1.800"/>
<text x="849" y="377" style="font-size:9px;fill:#2040c0">z</text><text x="870" y="397" style="font-size:9px;fill:#a02020">x</text>

<!-- Left -->
<rect x="355" y="422" width="470" height="303" fill="#363636"/>
<rect x="355" y="422" width="470" height="303" fill="url(#gl)"/>
<path d="M597 422V725" stroke="#0c0c0c" stroke-width="1.300"/>
<path filter="url(#rd2)" fill="#cfcfcf" d="M590 443L606 450 616 469 623 490 628 510 624 530 626 559 618 566 613 620 611 691 601 705 579 705 572 691 574 620 574 502 572 491 556 492 553 480 567 459 577 446Z"/>
<text x="358" y="439" class="v" textLength="176" lengthAdjust="spacingAndGlyphs">[+] [Left ] [Standard ] [Wireframe ]</text>
<rect x="770" y="455" width="24" height="25" fill="#808080"/>
<text x="777" y="470" style="font-size:6px;fill:#666">LEFT</text>
<ellipse cx="782" cy="481" rx="29" ry="2.800" fill="none" stroke="#8a8a8a" stroke-width="1.300"/>
<path d="M374 705V680" stroke="#2040c0" stroke-width="1.300"/><path d="M374 705H356" stroke="#b02020" stroke-width="1.300"/><path d="M374 705v-5" stroke="#2a8a2a" stroke-width="1.800"/>
<text x="373" y="685" style="font-size:9px;fill:#2040c0">z</text>

<!-- Perspective -->
<rect x="831" y="422" width="470" height="304" fill="url(#pb)"/>
<rect x="830.500" y="421.500" width="471" height="305" fill="none" stroke="#2e2e2e"/>
<g transform="translate(830,420) scale(.33333)">
<g clip-path="url(#pc)" fill="none" stroke="#6e6e6e" stroke-width="2">
<path d="M290 915L715 705 1140 915"/>
<path d="M343 889L384 915M396 862L479 915M449 836L573 915M556 784L762 915M609 757L857 915M662 731L951 915M715 705L1045 915"/>
<path d="M1087 889L1047 915M1034 862L954 915M981 836L861 915M874 784L674 915M821 757L580 915M768 731L488 915M715 705L395 915"/>
<path d="M500 810L667 917M930 810L768 917" stroke="#111" stroke-width="2.400"/>
</g>
<g filter="url(#b1)">
<path fill="#dadada" d="M720 97L750 110 790 140 830 240 860 265 900 295 920 320 910 342 860 352 820 320 815 450 812 480 700 500 615 470 612 440 610 385 590 430 550 467 490 457 472 430 495 385 530 300 570 230 600 180 640 120 690 105Z"/>
<path fill="#9c9c9c" d="M570 232L600 240 630 290 600 350 570 395 535 440 515 420 550 340Z" opacity=".45"/>
<path fill="#040404" d="M630 148L660 190 700 190 740 175 770 290 815 270 820 440 770 460 640 460 612 448 615 340 655 270 625 190 605 180Z"/>
<path fill="#c9c9c9" d="M612 450L640 465 770 465 812 448 810 475 770 490 690 505 620 480Z"/>
<path d="M740 120L770 290V470" stroke="#a8a8a8" stroke-width="5" fill="none"/>
<path d="M720 120L750 118M490 445L545 460M482 430L500 450M700 200L715 240" stroke="#333" stroke-width="5" fill="none"/>
<path fill="#0c0c0c" d="M615 490L700 505 812 480 816 590 812 700 803 790 750 808 710 770 700 780 668 872 630 884 582 847 600 700 618 600Z"/>
<g fill="#e2e2e2"><rect x="640" y="507" width="60" height="11"/><rect x="720" y="507" width="25" height="12"/><rect x="620" y="540" width="30" height="12"/><rect x="790" y="545" width="20" height="30"/><rect x="620" y="580" width="15" height="30"/><rect x="635" y="570" width="70" height="17"/><rect x="760" y="585" width="30" height="15"/><rect x="720" y="590" width="25" height="10"/><rect x="680" y="610" width="30" height="12"/><rect x="625" y="610" width="40" height="25"/><rect x="650" y="625" width="60" height="10"/><rect x="720" y="640" width="40" height="10"/><rect x="760" y="650" width="35" height="8"/><rect x="770" y="620" width="35" height="12"/><rect x="720" y="665" width="60" height="30"/><rect x="780" y="680" width="25" height="18"/><rect x="640" y="685" width="60" height="12"/><rect x="610" y="700" width="30" height="25"/><rect x="620" y="730" width="50" height="15"/><rect x="690" y="730" width="20" height="10"/><rect x="730" y="720" width="30" height="12"/><rect x="790" y="730" width="20" height="15"/><rect x="770" y="760" width="25" height="10"/><rect x="720" y="760" width="20" height="8"/><rect x="650" y="760" width="30" height="10"/><rect x="600" y="760" width="20" height="20"/><rect x="750" y="782" width="35" height="10"/><rect x="600" y="790" width="40" height="25"/><rect x="640" y="800" width="50" height="15"/><rect x="590" y="820" width="20" height="15"/><rect x="630" y="830" width="35" height="10"/></g>
</g>
<ellipse cx="1284" cy="190" rx="80" ry="27" fill="#2e2e2e" stroke="#858585" stroke-width="9"/>
<path d="M1238 110L1285 97 1333 110V165L1287 195 1238 165Z" fill="#8b8b8b"/>
<path d="M1238 110L1287 130 1333 110" fill="none" stroke="#777" stroke-width="2"/>
<path d="M62 855V800" stroke="#2040c0" stroke-width="4"/><path d="M62 855L110 840" stroke="#b02020" stroke-width="4"/><path d="M62 855L28 845" stroke="#2a8a2a" stroke-width="4"/>
</g>
<text x="834" y="439" class="v" textLength="237" lengthAdjust="spacingAndGlyphs" style="fill:#dedede">[+] [Perspective ] [Standard ] [Default Shading ]</text>
<text x="881" y="462" class="y">Total</text>
<text x="841" y="479" class="y" textLength="30" lengthAdjust="spacingAndGlyphs">Polys:</text><text x="881" y="479" class="y" textLength="41" lengthAdjust="spacingAndGlyphs">604,094</text>
<text x="841" y="495" class="y" textLength="28" lengthAdjust="spacingAndGlyphs">Verts:</text><text x="881" y="495" class="y" textLength="41" lengthAdjust="spacingAndGlyphs">312,329</text>
<text x="841" y="528" class="y" textLength="23" lengthAdjust="spacingAndGlyphs">FPS:</text><text x="881" y="528" class="y" textLength="38" lengthAdjust="spacingAndGlyphs">Inactive</text>
<text x="850" y="687" style="font-size:9px;fill:#2040c0">z</text><text x="866" y="703" style="font-size:9px;fill:#a02020">x</text>

<!-- command panel -->
<rect x="1302" y="116" width="198" height="612" fill="#444"/>
<rect x="1306" y="122" width="190" height="28" fill="#3a3a3a"/>
<rect x="1339" y="122" width="29" height="30" fill="#444"/>
<path d="M1322 129v16M1314 137h16" stroke="#c8c8c8" stroke-width="2.200"/>
<rect x="1346" y="129" width="14" height="15" fill="none" stroke="#3fbfb6" stroke-width="1.500"/><path d="M1347 144q1-13 13-15" fill="none" stroke="#ddd" stroke-width="1.500"/>
<rect x="1378" y="128" width="12" height="6" fill="#b0b0b0"/><path d="M1384 134v4M1379 144v-5h11v5" fill="none" stroke="#2f8f8a" stroke-width="1.500"/><rect x="1377" y="141" width="5" height="4" fill="#2f8f8a"/><rect x="1387" y="141" width="5" height="4" fill="#2f8f8a"/>
<circle cx="1418" cy="136" r="7" fill="#aaa"/><path d="M1411 129a9 9 0 0 0 0 14M1408 130a10 10 0 0 0 0 12" fill="none" stroke="#2f8f8a" stroke-width="1.300"/>
<rect x="1439" y="129" width="16" height="10" fill="#b8b8b8"/><path d="M1447 139v4M1442 143.500h10" stroke="#b8b8b8" stroke-width="1.800"/>
<path d="M1472 130l4 4 10 10" stroke="#b8b8b8" stroke-width="3" fill="none"/><circle cx="1473" cy="131" r="3" fill="none" stroke="#b8b8b8" stroke-width="1.600"/>
<rect x="1310" y="157" width="165" height="18" fill="#5a5a5a"/>
<rect x="1481" y="157" width="16" height="18" fill="#c8288c" stroke="#3a3a3a"/>
<rect x="1310" y="186" width="188" height="18" fill="#5e5e5e"/>
<text x="1312" y="199" class="s" textLength="54" lengthAdjust="spacingAndGlyphs" style="fill:#e0e0e0">Modifier List</text>
<path d="M1485 193h8l-4 5z" fill="#ddd"/>
<rect x="1310" y="209" width="188.500" height="140.500" fill="#444" stroke="#e8e8e8" stroke-width="1.500"/>
<path d="M1326 362l-8 9M1313 375l5-5 5 4-3-8 5-5-4-3z" stroke="#2a2a2a" stroke-width="1.500" fill="#555"/>
<rect x="1337" y="360" width="1.500" height="13" fill="#1e1e1e"/>
<rect x="1342" y="356" width="22" height="23" rx="3" fill="#46607f"/>
<rect x="1350" y="359" width="6" height="18" rx="2" fill="#5b6f88" stroke="#333"/>
<rect x="1370" y="360" width="1.500" height="13" fill="#1e1e1e"/>
<circle cx="1381" cy="363" r="4.500" fill="#5a5a5a" stroke="#333"/><circle cx="1390" cy="367" r="4.500" fill="none" stroke="#333"/><circle cx="1387" cy="373" r="4.500" fill="none" stroke="#333"/>
<path d="M1403 362h14M1405 362l1 15h8l1-15M1408 360h4M1408 365v10M1412 365v10" stroke="#2e2e2e" fill="none" stroke-width="1.400"/>
<rect x="1426" y="360" width="1.500" height="13" fill="#1e1e1e"/>
<rect x="1434" y="361" width="14" height="16" fill="#ddd" stroke="#333"/><path d="M1436 365h4v4h-4zM1436 371h4v4h-4zM1442 371h4v4h-4z" fill="none" stroke="#333"/><path d="M1444 369l6-9" stroke="#f2a818" stroke-width="2.500"/>
<path d="M1314 395H1396M1411 395H1493" stroke="#5c5c5c"/><rect x="1398" y="393.500" width="11" height="3.500" fill="#909090"/>

<!-- timeline -->
<rect x="28" y="726" width="1472" height="67" fill="#484848"/>
<rect x="38" y="733" width="14" height="16" rx="2" fill="#5c5c5c"/><rect x="176" y="733" width="14" height="16" rx="2" fill="#5c5c5c"/>
<rect x="53" y="733" width="121" height="16" rx="2" fill="#5c5c5c"/>
<path d="M47 737l-4 4 4 4M180 737l4 4-4 4" fill="none" stroke="#bbb"/>
<text x="97" y="745" class="s" style="fill:#c0c0c0">0 / 100</text>
<rect x="29" y="733" width="2.500" height="56" fill="#5e5e5e"/>
<rect x="0" y="726" width="28" height="67" fill="#434343"/>
<path d="M12 726l-7 13h14zM12 726v13M5 739l7-7 7 7" fill="none" stroke="#ddd" stroke-width="1.500"/>
<circle cx="12" cy="763" r="7" fill="#7fa6d8"/><circle cx="12" cy="763" r="8" fill="none" stroke="#7fa6d8" stroke-width="2" stroke-dasharray="2 1.500"/>
<rect x="86" y="753" width="1366" height="25" fill="#2b2b2b"/>
<rect x="86" y="778" width="1366" height="1" fill="#404040"/>
<rect x="86" y="779" width="1366" height="12" fill="#2d2d2d"/>
<rect x="88" y="753" width="1362" height="12" fill="url(#tk)"/>
<rect x="88" y="753" width="1362" height="15" fill="url(#tk5)"/>
<path d="M51 760v1M51 764v1M51 768v1" stroke="#ddd" stroke-width="1.600"/><path d="M54 769q2-8 4-4t5 2" fill="none" stroke="#3fbfb6" stroke-width="1.400"/>
<rect x="88" y="755" width="7" height="23" fill="#8c8420"/>
<text x="88" y="776" class="t" style="fill:#d8d09a">0</text>
<text x="155" y="776" class="t">5</text><text x="221" y="776" class="t">10</text><text x="288" y="776" class="t">15</text><text x="356" y="776" class="t">20</text><text x="424" y="776" class="t">25</text><text x="492" y="776" class="t">30</text><text x="559" y="776" class="t">35</text><text x="627" y="776" class="t">40</text><text x="695" y="776" class="t">45</text><text x="763" y="776" class="t">50</text><text x="831" y="776" class="t">55</text><text x="898" y="776" class="t">60</text><text x="966" y="776" class="t">65</text><text x="1034" y="776" class="t">70</text><text x="1102" y="776" class="t">75</text><text x="1169" y="776" class="t">80</text><text x="1237" y="776" class="t">85</text><text x="1305" y="776" class="t">90</text><text x="1373" y="776" class="t">95</text><text x="1438" y="776" class="t">100</text>

<!-- status -->
<rect x="0" y="793" width="1500" height="51" fill="#464646"/>
<rect x="0" y="795" width="131" height="49" fill="#fff"/>
<rect x="0" y="797" width="129" height="21" fill="#e2c9c9"/>
<rect x="0" y="819" width="129" height="1.500" fill="#666"/>
<text x="3" y="832" style="font-family:'Liberation Mono',monospace;font-size:11px;fill:#8a8a8a" textLength="124" lengthAdjust="spacingAndGlyphs">MAXScript Mini Li:</text>
<rect x="133.500" y="795" width="1" height="49" fill="#2a2a2a"/>
<text x="138" y="812" class="s" textLength="64" lengthAdjust="spacingAndGlyphs" style="fill:#e2e2e2">None Selected</text>
<text x="138" y="837" class="s" textLength="176" lengthAdjust="spacingAndGlyphs" style="fill:#e2e2e2">Click or click-and-drag to select objects</text>
<path d="M635 804v-4h5M644 800h5v4M649 811v4h-5M640 815h-5v-4" fill="none" stroke="#333" stroke-width="1.500"/><rect x="638" y="803" width="9" height="9" fill="none" stroke="#2e2e2e" stroke-width="1.400"/>
<rect x="663" y="806" width="10" height="9" rx="1" fill="none" stroke="#2e2e2e" stroke-width="1.500"/><path d="M665 806v-3a3 3 0 0 1 6 0v3" fill="none" stroke="#2e2e2e" stroke-width="1.500"/>
<rect x="688" y="802" width="12" height="13" fill="#ddd" stroke="#222"/><circle cx="694" cy="808.500" r="3" fill="none" stroke="#222" stroke-width="1.500"/>
<text x="708" y="812" class="s" style="fill:#dcdcdc;font-weight:bold">X:</text><rect x="722" y="800" width="56" height="17" fill="#5a5a5a"/>
<text x="790" y="812" class="s" style="fill:#dcdcdc;font-weight:bold">Y:</text><rect x="803" y="800" width="56" height="17" fill="#5a5a5a"/>
<text x="871" y="812" class="s" style="fill:#dcdcdc;font-weight:bold">Z:</text><rect x="884" y="800" width="55" height="17" fill="#5a5a5a"/>
<text x="953" y="812" class="s" textLength="65" lengthAdjust="spacingAndGlyphs" style="fill:#e2e2e2">Grid = 10.0cm</text>
<rect x="931" y="823" width="20" height="21" rx="3" fill="#2fdcea"/>
<path d="M941 827l6 3.500v7l-6 3.500-6-3.500v-7z" fill="#6a8a90" stroke="#444"/>
<text x="955" y="837" class="s" textLength="65" lengthAdjust="spacingAndGlyphs" style="fill:#e2e2e2">Add Time Tag</text>
<path d="M1063 802v11" stroke="#ccc" stroke-width="2"/><path d="M1071 802l-6 5.500 6 5.500zM1077 802l-6 5.500 6 5.500z" class="k"/>
<rect x="1081" y="800" width="1.500" height="15" fill="#1e1e1e"/>
<path d="M1093 802l-6 5.500 6 5.500z" class="k"/><path d="M1096 802v11M1100 802v11" stroke="#ccc" stroke-width="2.200"/>
<path d="M1110 799l14 9-14 9z" class="k"/><use href="#fm" x="1126" y="818"/>
<path d="M1131 802v11M1135 802v11" stroke="#ccc" stroke-width="2.200"/><path d="M1138 802l6 5.500-6 5.500z" class="k"/>
<rect x="1149" y="800" width="1.500" height="15" fill="#1e1e1e"/>
<path d="M1155 802l6 5.500-6 5.500zM1161 802l6 5.500-6 5.500z" class="k"/><path d="M1168.500 802v11" stroke="#ccc" stroke-width="2"/>
<path d="M1069 824l-5 4.500 5 4.500zM1072 824l5 4.500-5 4.500z" class="k"/>
<rect x="1083" y="821" width="68" height="18" fill="#5c5c5c"/>
<text x="1086" y="834" class="s" style="fill:#c0c0c0">0</text>
<path d="M1143 826l2.500-3 2.500 3zM1143 831h5l-2.500 3z" fill="#ccc"/>
<rect x="1151" y="821" width="1.500" height="18" fill="#1e1e1e"/>
<circle cx="1162" cy="827" r="6" fill="#cfcfcf"/><path d="M1162 823v4h3" stroke="#444" fill="none"/><circle cx="1168" cy="832" r="4" fill="#f2a818"/><circle cx="1168" cy="832" r="1.500" fill="#444"/>
<rect x="1186" y="797" width="42" height="45" rx="3" fill="#5a5a5a"/>
<path d="M1206 805v25M1194 817h25" stroke="#ddd" stroke-width="5"/>
<circle cx="1210" cy="830" r="3.500" fill="none" stroke="#3fbfb6" stroke-width="2"/><path d="M1212 827l8-8M1217 822l2 2" stroke="#3fbfb6" stroke-width="2"/>
<rect x="1232" y="797" width="45" height="20" rx="2" fill="#5a5a5a"/><rect x="1232" y="820" width="45" height="20" rx="2" fill="#5a5a5a"/>
<text x="1245" y="812" class="s" style="fill:#cfcfcf">Auto</text><text x="1241" y="834" class="s" style="fill:#cfcfcf">Set K.</text>
<rect x="1281" y="797" width="112" height="18" fill="#5a5a5a"/>
<text x="1287" y="810" class="s" style="fill:#d0d0d0">Selected</text>
<path d="M1379 804h8l-4 5z" fill="#ddd"/>
<rect x="1284" y="823" width="4" height="4" fill="none" stroke="#ccc"/><path d="M1288 826q8 1 12 12" fill="none" stroke="#3fbfb6" stroke-width="1.800"/><use href="#fm" x="1304" y="842"/>
<rect x="1306" y="820" width="86" height="21" rx="2" fill="#5a5a5a"/>
<text x="1330" y="835" class="s" style="fill:#cfcfcf">Filters...</text>
<circle cx="1414" cy="804" r="5" fill="none" stroke="#ddd" stroke-width="1.800"/><path d="M1410 808l-4 5" stroke="#ddd" stroke-width="2.200"/>
<circle cx="1434" cy="809" r="3.500" fill="none" stroke="#ddd" stroke-width="1.600"/><path d="M1431 812l-3 3" stroke="#ddd" stroke-width="2"/><rect x="1436" y="800" width="5" height="4" fill="#3fbfb6"/><rect x="1436" y="805" width="5" height="4" fill="#3fbfb6"/><rect x="1431" y="802" width="4" height="4" fill="#3fbfb6"/>
<path d="M1457 801l7 3.500v6l-7 3.500-7-3.500v-6z" fill="#3fbfb6"/><path d="M1450 803v-3h3M1461 800h3v3M1450 812v3h3M1464 812v3h-3" fill="none" stroke="#ddd" stroke-width="1.200"/><use href="#fm" x="1466" y="818"/>
<path d="M1482 799l5 3v7l-5 3-5-3v-7z" fill="#3fbfb6"/><path d="M1476 807l-3 3 3 3 3-3z" fill="#ddd"/><use href="#fm" x="1489" y="818"/>
<circle cx="1412" cy="829" r="4" fill="none" stroke="#3fbfb6" stroke-width="1.600"/><path d="M1409 832l-2 3" stroke="#3fbfb6" stroke-width="1.800"/><rect x="1406" y="823" width="13" height="12" fill="none" stroke="#ddd" stroke-dasharray="2 2"/>
<path d="M1432 836q-4-5-4-7l2 0 1 2v-7h2v5-7h2v7-6h2v6-4h2v9q0 3-3 3z" fill="#ddd"/><use href="#fm" x="1444" y="842"/>
<circle cx="1457" cy="829" r="6" fill="#ddd"/><path d="M1451 829a6 6 0 0 1 12 0z" fill="#3fbfb6"/><path d="M1449 836l16-13" stroke="#ddd" stroke-width="1.300"/><use href="#fm" x="1466" y="842"/>
<rect x="1473" y="823" width="13" height="13" fill="#ddd"/><path d="M1476 833l7-7M1479 826h4v4" stroke="#333" fill="none" stroke-width="1.500"/>
</svg>
</body></html>
